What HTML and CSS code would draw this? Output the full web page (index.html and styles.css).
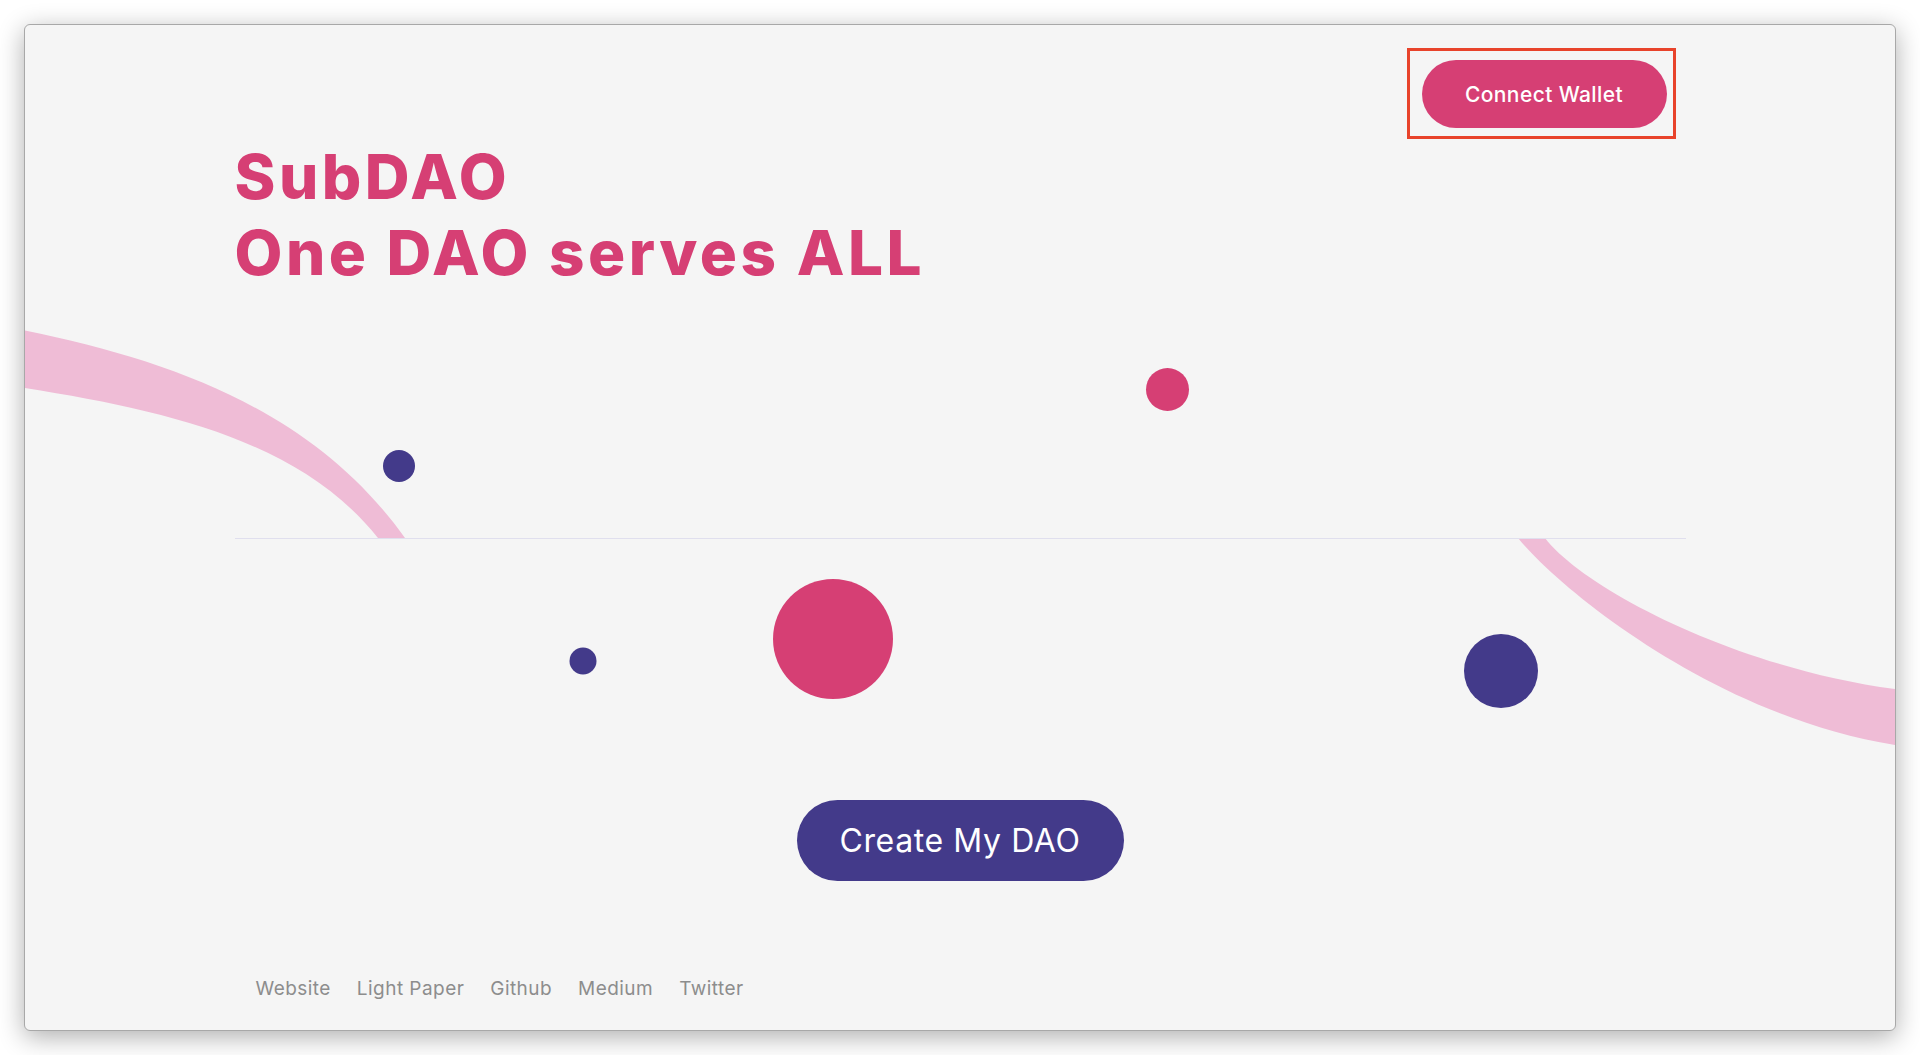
FILE: index.html
```html
<!DOCTYPE html>
<html lang="en">
<head>
<meta charset="utf-8">
<title>SubDAO</title>
<link rel="stylesheet" href="styles.css">
</head>
<body>
<div class="window">
  <svg class="deco" viewBox="0 0 1871 1005" width="1871" height="1005" aria-hidden="true">
    <g transform="translate(-25,-25)">
      <path class="arc" d="M 18 329 C 174 360, 315 412, 405 538 L 378 538 C 300 440, 164 410, 18 387 Z"/>
      <path class="arc" d="M 1545 538 C 1585 590, 1740 670, 1902 690 L 1902 746 C 1720 720, 1560 590, 1518 538 Z"/>
      <circle class="blue" cx="399" cy="466" r="16"/>
      <circle class="pink" cx="1167.5" cy="389.5" r="21.5"/>
      <circle class="blue" cx="583" cy="661" r="13.5"/>
      <circle class="pink" cx="833" cy="639" r="60"/>
      <circle class="blue" cx="1501" cy="671" r="37"/>
    </g>
  </svg>
  <div class="page">
    <section class="hero">
      <header class="topbar">
        <div class="highlight">
          <button class="btn-connect">Connect Wallet</button>
        </div>
      </header>
      <h1 class="title">SubDAO<br>One DAO serves ALL</h1>
    </section>
    <section class="action">
      <button class="btn-create">Create My DAO</button>
    </section>
    <footer class="links">
      <a href="#">Website</a>
      <a href="#">Light Paper</a>
      <a href="#">Github</a>
      <a href="#">Medium</a>
      <a href="#">Twitter</a>
    </footer>
  </div>
</div>
</body>
</html>
```
FILE: styles.css
```css
html, body {
  margin: 0;
  padding: 0;
  background: #ffffff;
}
body {
  font-family: Inter, "Open Sans", sans-serif;
}
.window {
  margin: 24px;
  height: 1007px;
  box-sizing: border-box;
  border: 1px solid #a8a8a8;
  border-radius: 6px;
  background: #f5f5f5;
  box-shadow: 0 6px 26px rgba(0, 0, 0, 0.32);
  position: relative;
  overflow: hidden;
}
.deco {
  position: absolute;
  left: 0;
  top: 0;
  z-index: 0;
}
.arc { fill: #efbcd6; }
.blue { fill: #433a8a; }
.pink { fill: #d63f74; }

.page {
  position: relative;
  z-index: 1;
  width: 1451px;
  margin: 0 auto;
}
.hero {
  height: 514px;
  box-sizing: border-box;
  border-bottom: 1px solid #e0dfee;
  display: flex;
  flex-direction: column;
}
.topbar {
  display: flex;
  justify-content: flex-end;
  padding-top: 23px;
  padding-right: 10px;
}
.highlight {
  border: 3px solid #e8432b;
  padding: 9px 6px 8px 12px;
}
.btn-connect {
  display: block;
  width: 245px;
  height: 68px;
  border: none;
  border-radius: 34px;
  background: #d63f74;
  color: #ffffff;
  font-family: Inter, sans-serif;
  font-weight: 500;
  font-size: 21px;
  letter-spacing: 0.4px;
  padding: 0;
  cursor: pointer;
}
.title {
  margin: 0;
  color: #d63f74;
  font-family: Inter, sans-serif;
  font-weight: 800;
  font-size: 62px;
  line-height: 76px;
  letter-spacing: 3.5px;
}
.action {
  display: flex;
  justify-content: center;
  padding-top: 261px;
}
.btn-create {
  width: 327px;
  height: 81px;
  border: none;
  border-radius: 41px;
  background: #433a8a;
  color: #ffffff;
  font-family: Inter, sans-serif;
  font-weight: 400;
  font-size: 32px;
  letter-spacing: 0.6px;
  padding: 0;
  cursor: pointer;
}
.links {
  display: flex;
  gap: 26px;
  padding-left: 21px;
  padding-top: 96px;
}
.links a {
  color: #8d8d8d;
  text-decoration: none;
  font-family: Inter, sans-serif;
  font-size: 19px;
  line-height: 24px;
  letter-spacing: 0.45px;
}
```
